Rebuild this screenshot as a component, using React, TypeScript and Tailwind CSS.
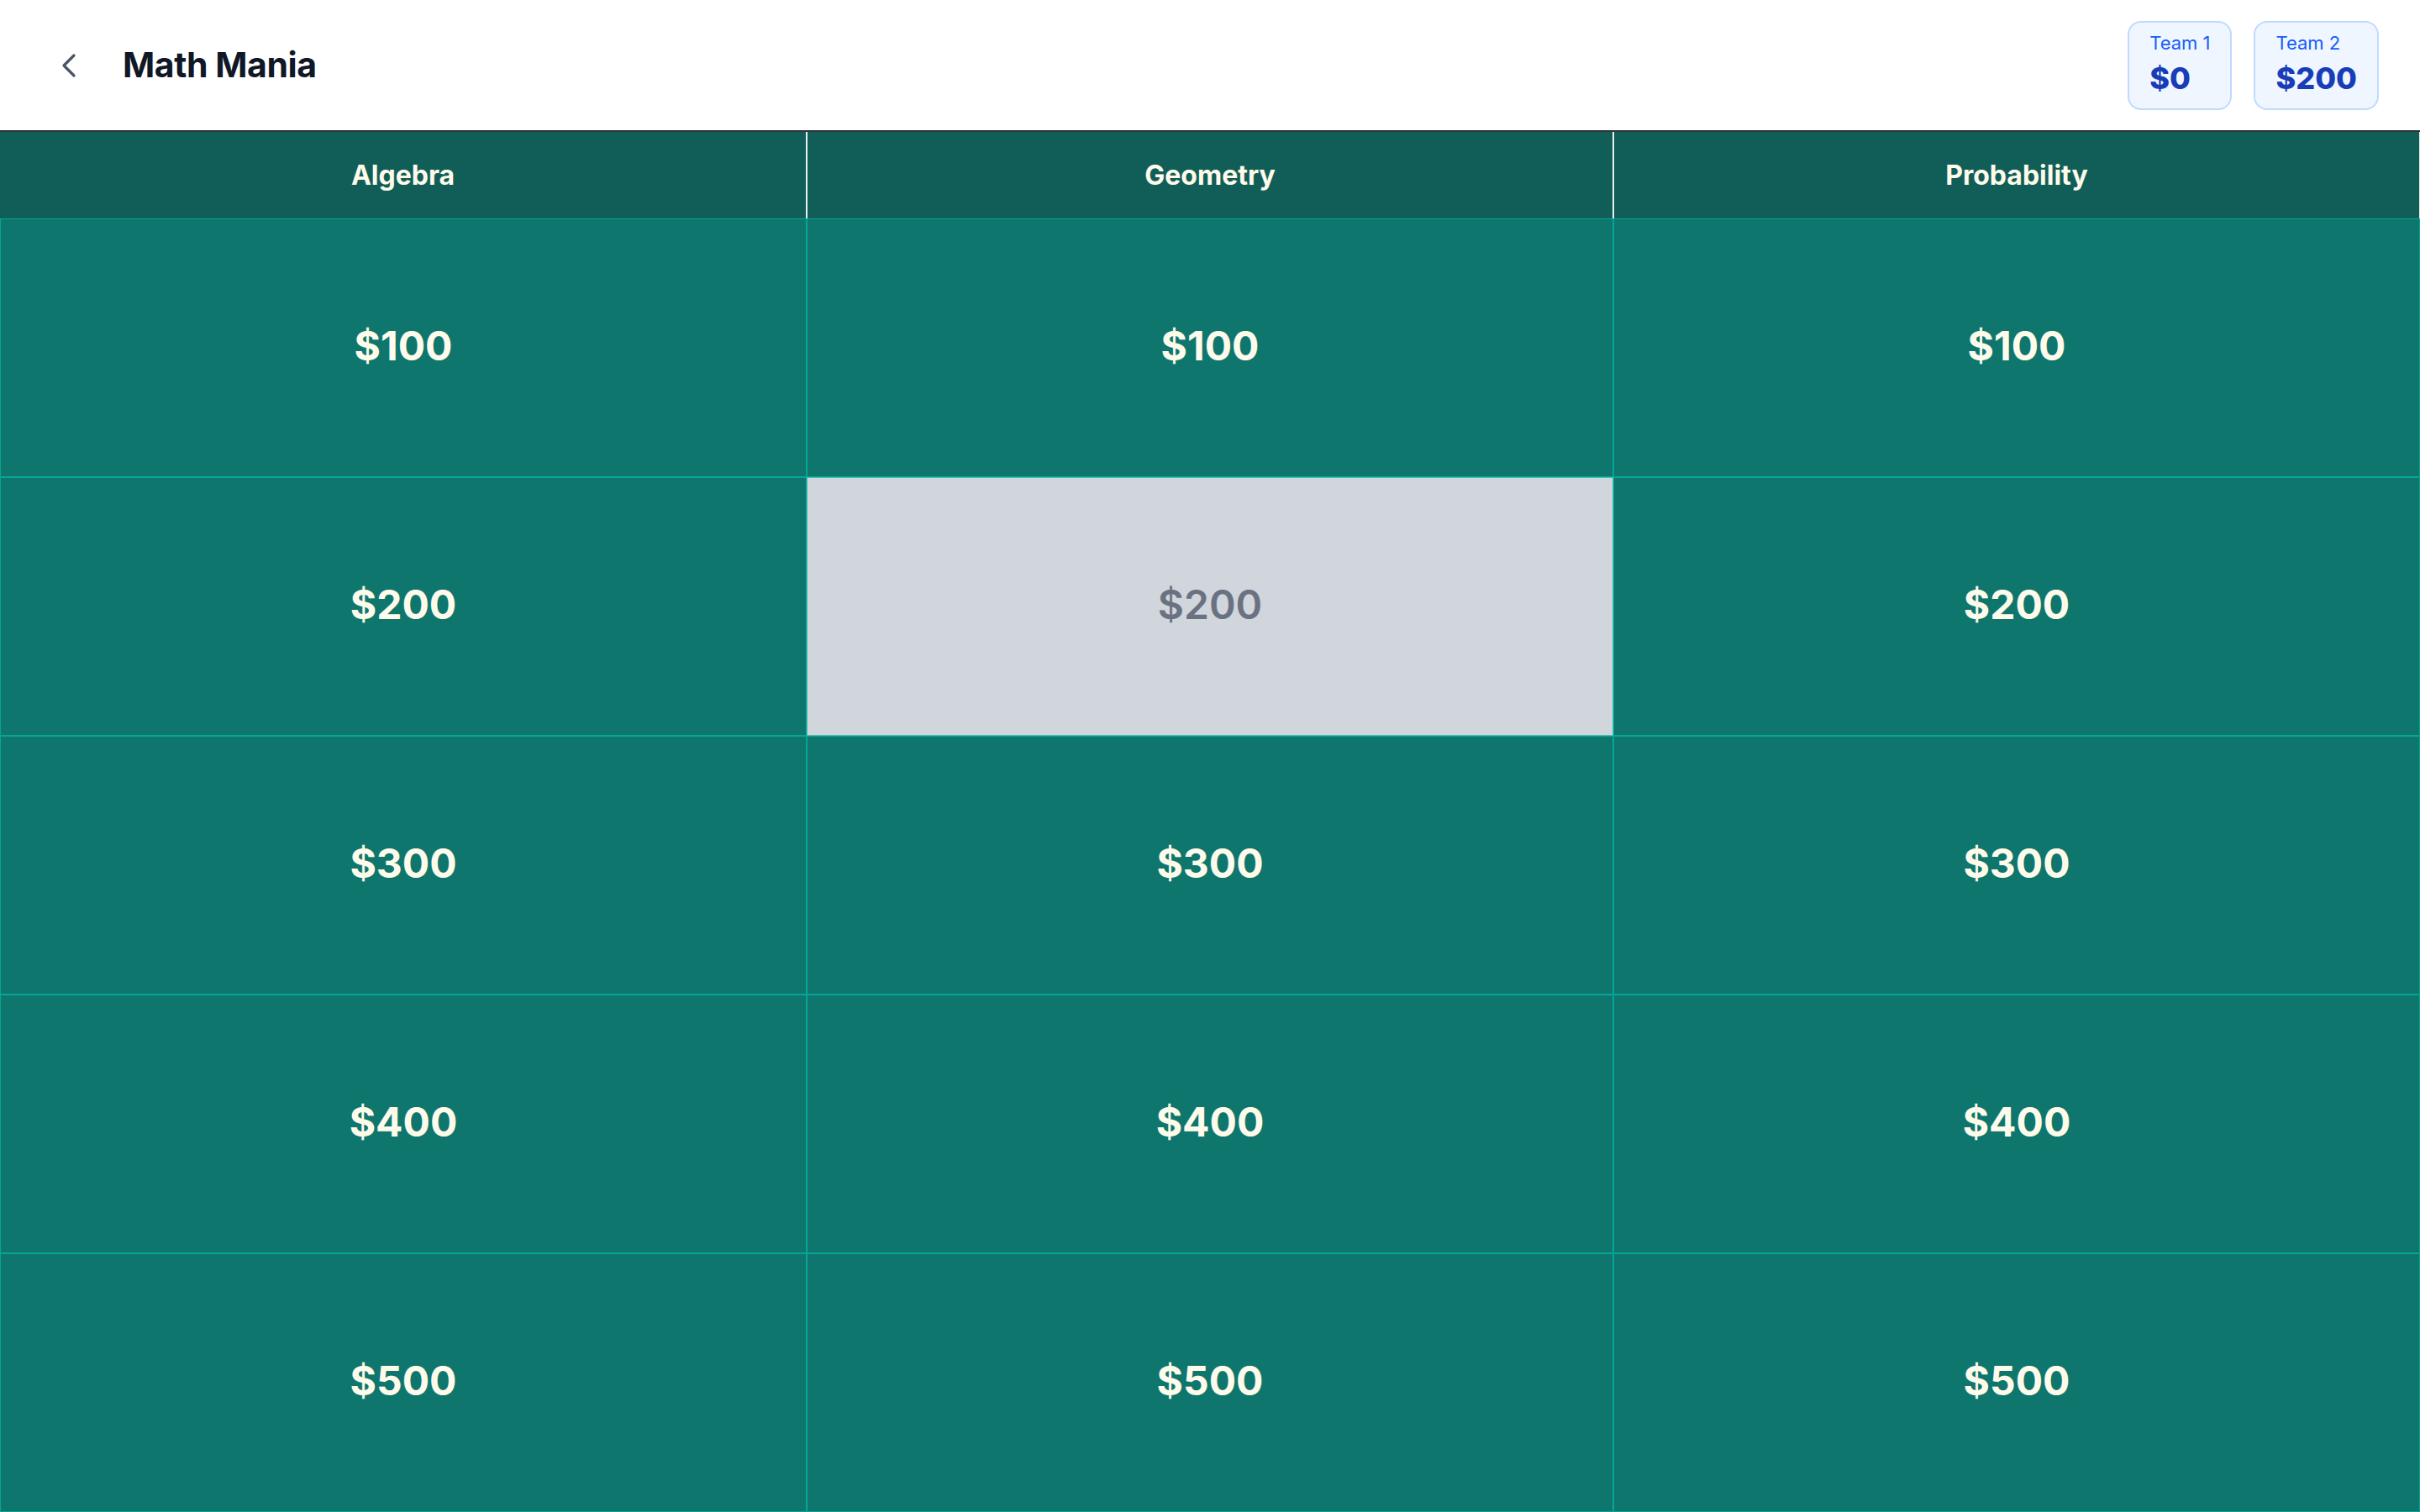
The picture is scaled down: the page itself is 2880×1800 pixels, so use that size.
import { ChevronLeft } from 'lucide-react'

const categories = ['Algebra', 'Geometry', 'Probability']
const values = [100, 200, 300, 400, 500]
const used = ['Geometry-200']

const teams = [
  { name: 'Team 1', score: 0 },
  { name: 'Team 2', score: 200 },
]

export default function App() {
  return (
    <div className="flex h-screen flex-col bg-white font-['Inter','Liberation_Sans',sans-serif]">
      <header className="flex h-[157px] shrink-0 items-center justify-between border-b-2 border-[#2f3338] pl-[58px] pr-[49px]">
        <div className="flex items-center gap-10">
          <button className="text-gray-600">
            <ChevronLeft size={48} strokeWidth={1.6} />
          </button>
          <h1 className="text-[41px] font-bold tracking-[-0.01em] text-gray-900">Math Mania</h1>
        </div>
        <div className="flex gap-[26px]">
          {teams.map((t) => (
            <div key={t.name} className="rounded-2xl border-2 border-blue-200 bg-blue-50 px-6 pb-[14px] pt-[10px]">
              <div className="text-[22px] leading-[28px] text-blue-600">{t.name}</div>
              <div className="mt-[6px] text-[36px] font-extrabold leading-[44px] text-blue-800">${t.score}</div>
            </div>
          ))}
        </div>
      </header>

      <div className="grid flex-1 grid-cols-3 grid-rows-[103px_repeat(5,1fr)]">
        {categories.map((c, i) => (
          <div
            key={c}
            className={
              i === 0
                ? 'flex items-center justify-center border-r border-white/90 bg-[#115e59] text-[32px] font-bold text-amber-50'
                : 'flex items-center justify-center border-x border-white/90 bg-[#115e59] text-[32px] font-bold text-amber-50'
            }
          >
            {c}
          </div>
        ))}
        {values.map((v) =>
          categories.map((c) =>
            used.includes(`${c}-${v}`) ? (
              <div
                key={c + v}
                className="flex items-center justify-center border border-teal-500/70 bg-gray-300 pb-1 text-[48px] font-semibold text-gray-500"
              >
                ${v}
              </div>
            ) : (
              <div
                key={c + v}
                className="flex items-center justify-center border border-teal-500/70 bg-[#0f766e] pb-1 text-[48px] font-bold text-amber-50"
              >
                ${v}
              </div>
            )
          )
        )}
      </div>
    </div>
  )
}
